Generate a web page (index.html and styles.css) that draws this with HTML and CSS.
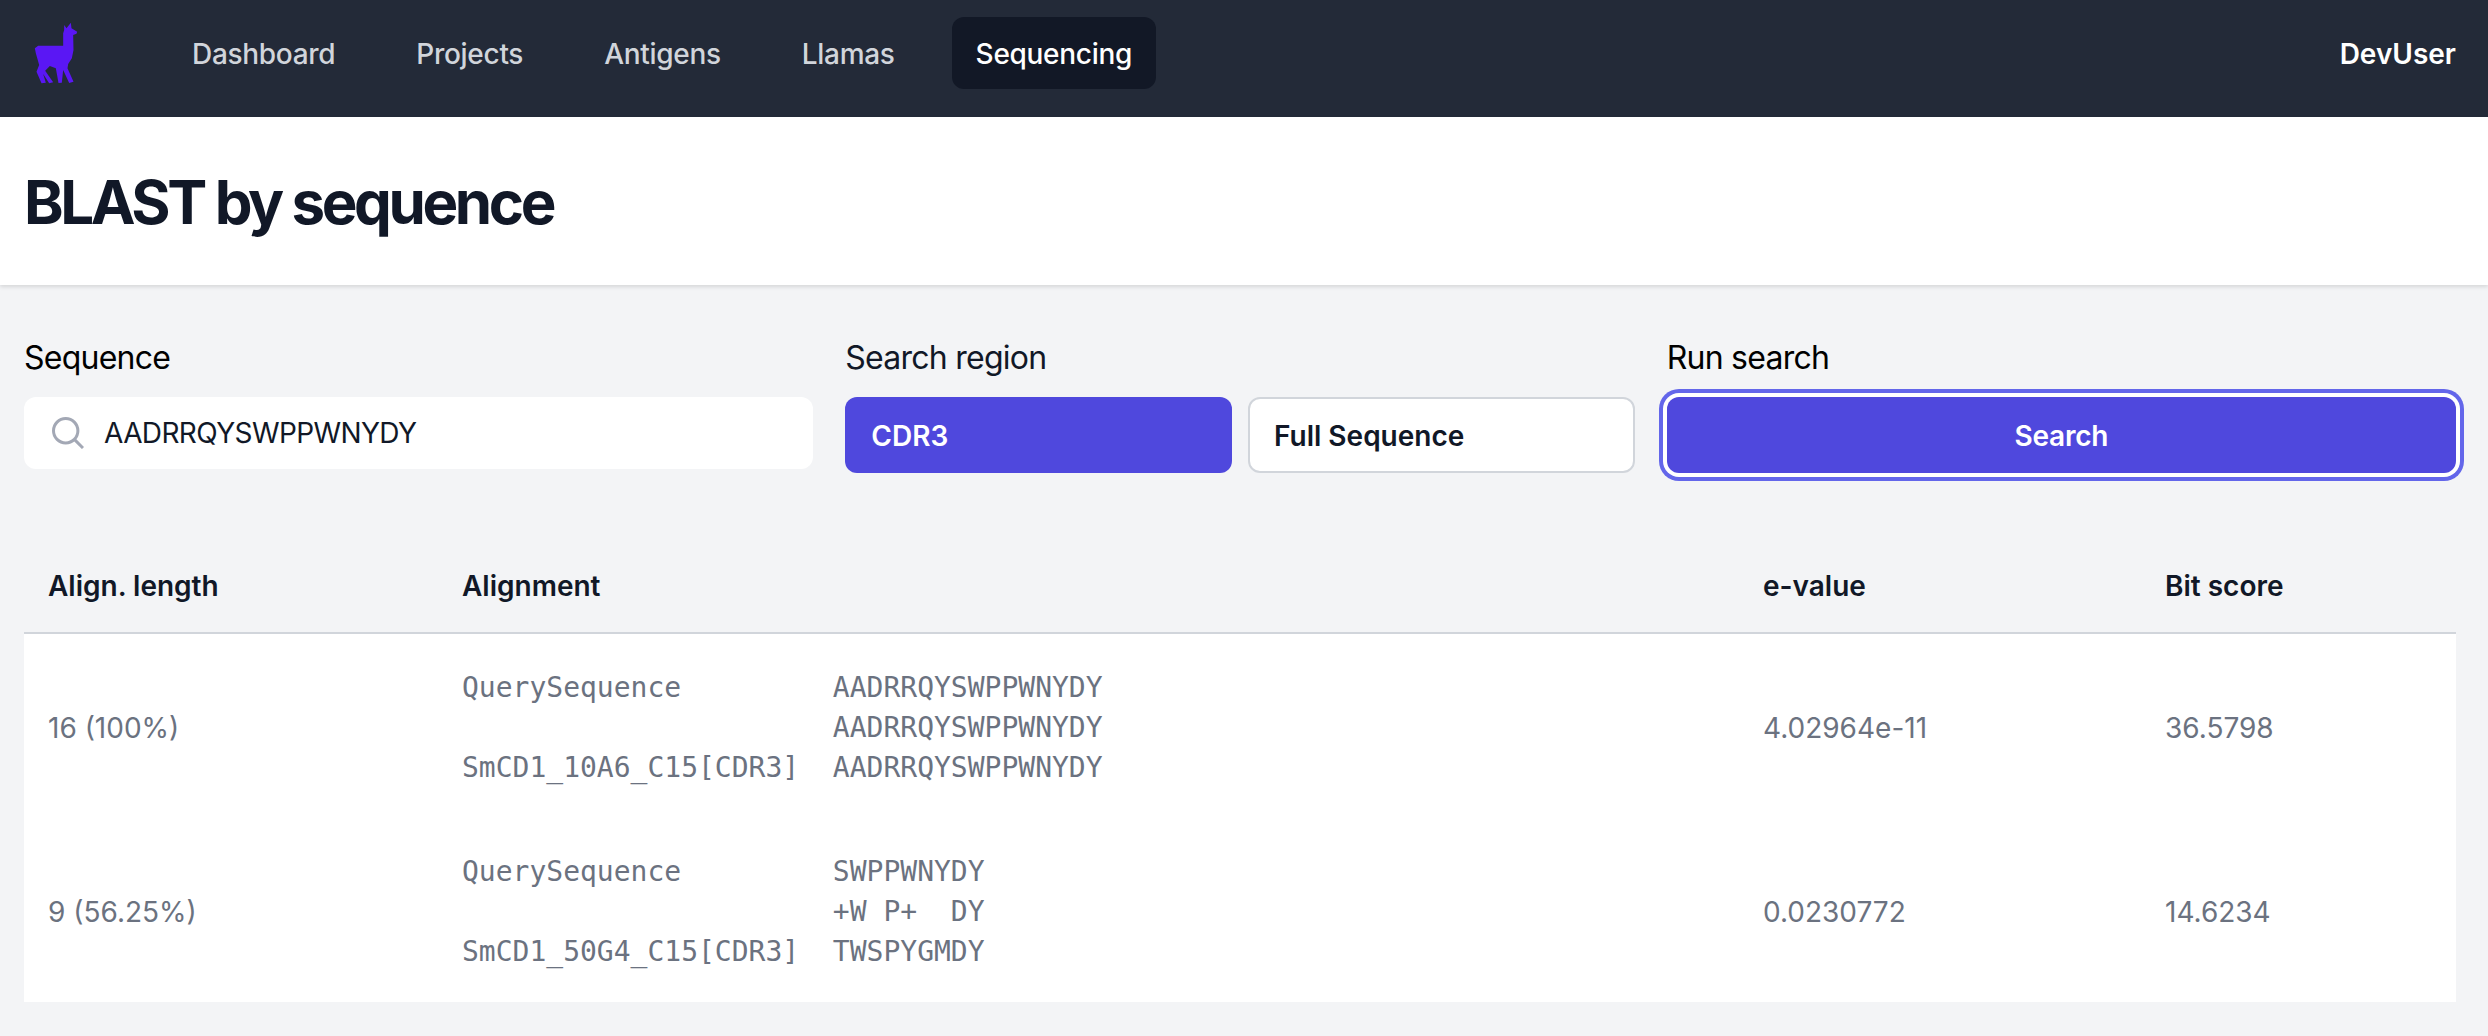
FILE: index.html
```html
<!DOCTYPE html>
<html lang="en">
<head>
    <meta charset="UTF-8">
    <title>BLAST by sequence</title>
    <link rel="stylesheet" href="styles.css">
</head>
<body>
<nav class="navbar">
    <svg class="logo" viewBox="100 60 140 195" aria-hidden="true">
        <path d="M213 68 L215 85 L232 95 L230 101 L220 105 L221 150 L216 175 L205 192 L203 205 L221 245 L208 249 L190 210 L186 248 L176 249 L168 205 L150 198 L136 212 L160 247 L148 250 L130 222 L138 248 L125 250 L110 215 L118 195 L108 160 L105 145 L115 137 L190 137 L190 100 L193 90 L193 75 L200 85 Z"/>
    </svg>
    <ul class="nav-links">
        <li><a href="#">Dashboard</a></li>
        <li><a href="#">Projects</a></li>
        <li><a href="#">Antigens</a></li>
        <li><a href="#">Llamas</a></li>
        <li><a href="#" class="current">Sequencing</a></li>
    </ul>
    <span class="user">DevUser</span>
</nav>
<header class="page-header">
    <h1>BLAST by sequence</h1>
</header>
<main class="content">
    <form class="search-form">
        <div class="field">
            <label class="field-label">Sequence</label>
            <div class="search-box">
                <svg class="search-icon" viewBox="0 0 32 32" aria-hidden="true">
                    <circle cx="13.7" cy="13.7" r="12.2"/>
                    <path d="M22.6 22.6 L31 31"/>
                </svg>
                <span class="search-value">AADRRQYSWPPWNYDY</span>
            </div>
        </div>
        <div class="field">
            <label class="field-label region-label">Search region</label>
            <div class="region-options">
                <button type="button" class="btn btn-left btn-primary">CDR3</button>
                <button type="button" class="btn btn-left btn-outline">Full Sequence</button>
            </div>
        </div>
        <div class="field">
            <label class="field-label">Run search</label>
            <button type="button" class="btn btn-primary btn-focus">Search</button>
        </div>
    </form>
    <table class="results">
        <thead>
            <tr>
                <th class="col-length">Align. length</th>
                <th class="col-alignment">Alignment</th>
                <th class="col-evalue">e-value</th>
                <th>Bit score</th>
            </tr>
        </thead>
        <tbody>
            <tr>
                <td>16 (100%)</td>
                <td><pre>QuerySequence         AADRRQYSWPPWNYDY
                      AADRRQYSWPPWNYDY
SmCD1_10A6_C15[CDR3]  AADRRQYSWPPWNYDY</pre></td>
                <td>4.02964e-11</td>
                <td>36.5798</td>
            </tr>
            <tr>
                <td>9 (56.25%)</td>
                <td><pre>QuerySequence         SWPPWNYDY
                      +W P+  DY
SmCD1_50G4_C15[CDR3]  TWSPYGMDY</pre></td>
                <td>0.0230772</td>
                <td>14.6234</td>
            </tr>
        </tbody>
    </table>
</main>
</body>
</html>
```

FILE: styles.css
```css
*{ padding: 0; margin: 0; box-sizing: border-box;}
html,body{
    height: 100%;
}
body{
    background-color: #f3f4f6;
    color: #111827;
    font-family: Inter, "Liberation Sans", sans-serif;
    font-size: 28px;
    line-height: 40px;
    overflow: hidden;
}

/* top bar */
.navbar{
    display: flex;
    align-items: flex-start;
    height: 117px;
    padding: 17px 32px 0 24px;
    background-color: #232a38;
}
.logo{
    width: 47px;
    height: 65px;
    margin: 3px 88px 0 9px;
    fill: #5a17f4;
}
.nav-links{
    display: flex;
    gap: 33px;
    list-style: none;
}
.nav-links a{
    display: block;
    padding: 17px 24px 15px;
    border-radius: 12px;
    color: #d1d5db;
    font-weight: 500;
    letter-spacing: -.3px;
    text-decoration: none;
}
.nav-links a.current{
    background-color: #121826;
    color: #fff;
}
.user{
    margin-left: auto;
    padding-top: 17px;
    color: #fff;
    font-weight: 600;
}

/* page title */
.page-header{
    height: 168px;
    padding: 49px 24px 47px;
    background-color: #fff;
    box-shadow: 0 2px 4px rgba(0,0,0,.12);
}
.page-header h1{
    font-size: 60px;
    line-height: 72px;
    font-weight: 700;
    letter-spacing: -3.4px;
}

.content{
    padding: 49px 32px 0 24px;
}

/* search form */
.search-form{
    display: grid;
    grid-template-columns: repeat(3, 1fr);
    column-gap: 32px;
    align-items: start;
}
.field-label{
    display: block;
    height: 48px;
    margin-bottom: 15px;
    color: #000;
    font-size: 32px;
    line-height: 48px;
    letter-spacing: -.75px;
}
.region-label{
    color: #111827;
}
.search-box{
    display: flex;
    align-items: center;
    height: 72px;
    padding-left: 28px;
    border-radius: 12px;
    background-color: #fff;
}
.search-icon{
    flex: none;
    width: 32px;
    height: 32px;
    margin-right: 20px;
    fill: none;
    stroke: #a3a8b5;
    stroke-width: 3;
}
.search-value{
    letter-spacing: -.6px;
}
.region-options{
    display: grid;
    grid-template-columns: 1fr 1fr;
    column-gap: 16px;
}
.btn{
    display: block;
    width: 100%;
    height: 76px;
    padding-top: 2px;
    border: 2px solid transparent;
    border-radius: 12px;
    font-family: inherit;
    font-size: 28px;
    font-weight: 600;
}
.btn-left{
    padding-left: 24px;
    padding-right: 24px;
    text-align: left;
}
.btn-primary{
    background-color: #4f48dd;
    color: #fff;
}
.btn-outline{
    border-color: #d1d5db;
    background-color: #fff;
    color: #111827;
}
.btn-focus{
    letter-spacing: -.2px;
    box-shadow: 0 0 0 4px #fff, 0 0 0 8px #6366ea;
}

/* results */
.results{
    width: 100%;
    margin-top: 64px;
    border-collapse: collapse;
    table-layout: fixed;
}
.results th{
    height: 96px;
    padding: 2px 24px 0;
    border-bottom: 2px solid #d1d5db;
    font-weight: 600;
    text-align: left;
}
.results td{
    height: 184px;
    padding: 34px 24px 30px;
    background-color: #fff;
    color: #6b7280;
    vertical-align: middle;
}
.results pre{
    font-family: "DejaVu Sans Mono", monospace;
    font-size: 28px;
    line-height: 40px;
}
.col-length{ width: 414px;}
.col-alignment{ width: 1301px;}
.col-evalue{ width: 402px;}
```
